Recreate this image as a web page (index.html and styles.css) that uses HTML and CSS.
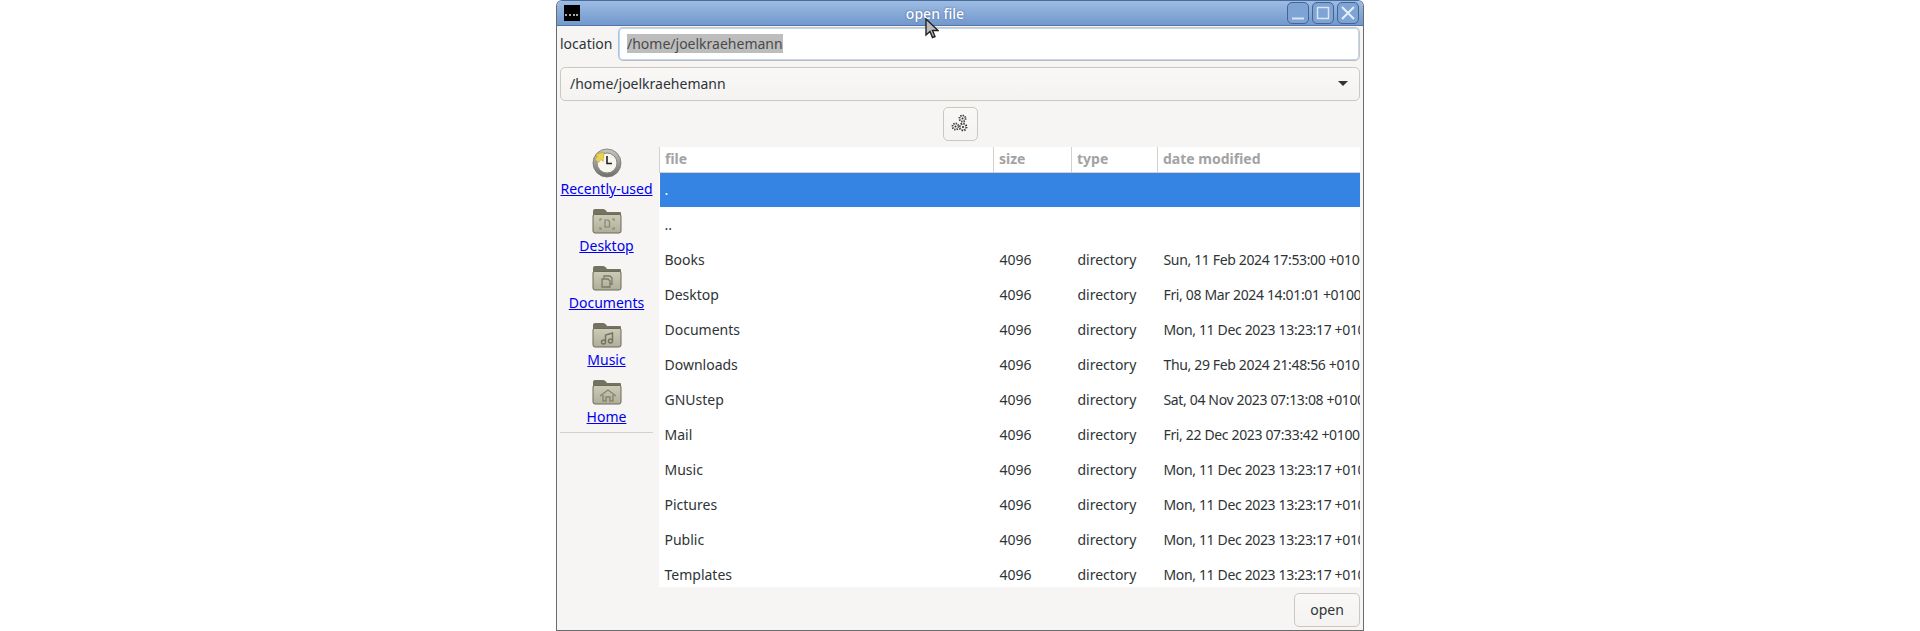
FILE: index.html
```html
<!DOCTYPE html>
<html lang="en">
<head>
    <meta charset="UTF-8">
    <title>open file</title>
    <link rel="stylesheet" href="styles.css">
</head>
<body>
    <svg width="0" height="0" class="defs">
        <defs>
            <linearGradient id="folderBody" x1="0" y1="0" x2="0" y2="1">
                <stop offset="0" stop-color="#cbcbb8"/>
                <stop offset="1" stop-color="#aeae99"/>
            </linearGradient>
            <linearGradient id="clockRim" x1="0" y1="0" x2="0" y2="1">
                <stop offset="0" stop-color="#c9c9c4"/>
                <stop offset="1" stop-color="#6f6f6a"/>
            </linearGradient>
            <symbol id="folder" viewBox="0 0 30 26">
                <path d="M1 24V3q0-2 2-2h8q2 0 3 1.500l1 1.500h13q1 0 1 1v4H1z" fill="#73735f"/>
                <path d="M1 8q0-1.500 1.500-1.500h25Q29 6.500 29 8v15q0 2-2 2H3q-2 0-2-2z" fill="url(#folderBody)" stroke="#6a6a58"/>
            </symbol>
            <symbol id="gear" viewBox="0 0 9 9">
                <circle cx="4.500" cy="4.500" r="3.200" fill="#f7f6f5" stroke="#333" stroke-width="1.600" stroke-dasharray="1.200 1.300"/>
                <circle cx="4.500" cy="4.500" r="2.600" fill="none" stroke="#555" stroke-width=".5"/>
                <circle cx="4.500" cy="4.500" r="1" fill="#333"/>
            </symbol>
        </defs>
    </svg>

    <div class="window">
        <div class="titlebar">
            <svg class="app-icon" width="16" height="16" viewBox="0 0 16 16">
                <rect width="16" height="16" fill="#000"/>
                <path d="M1 10h3M5 10h3M9 10h6" stroke="#ddd" stroke-width="1.500" stroke-dasharray="2 1"/>
            </svg>
            <span class="title">open file</span>
            <div class="wm-buttons">
                <div class="wm-btn">
                    <svg width="20" height="20" viewBox="0 0 20 20"><path d="M4 15.500h12" stroke="#dbe6f5" stroke-width="2"/></svg>
                </div>
                <div class="wm-btn">
                    <svg width="20" height="20" viewBox="0 0 20 20"><rect x="4.500" y="4.500" width="11" height="11" fill="none" stroke="#dbe6f5" stroke-width="1.500"/></svg>
                </div>
                <div class="wm-btn">
                    <svg width="20" height="20" viewBox="0 0 20 20"><path d="M4 4l12 12M16 4L4 16" stroke="#e6edf8" stroke-width="2"/></svg>
                </div>
            </div>
        </div>

        <div class="content">
            <div class="location-row">
                <label class="location-label">location</label>
                <div class="entry"><span class="selected-text">/home/joelkraehemann</span></div>
            </div>

            <div class="combo">
                <span>/home/joelkraehemann</span>
                <span class="arrow"></span>
            </div>

            <div class="tool-row">
                <button class="tool-btn">
                    <svg width="18" height="20" viewBox="0 0 18 20">
                        <use href="#gear" x="7" y="0" width="9" height="9"/>
                        <use href="#gear" x="0" y="8" width="9" height="9"/>
                        <use href="#gear" x="7" y="8" width="10" height="10"/>
                    </svg>
                </button>
            </div>

            <div class="main">
                <div class="sidebar">
                    <a class="place" href="#">
                        <svg class="clock" width="30" height="30" viewBox="0 0 30 30">
                            <circle cx="15" cy="15" r="14" fill="url(#clockRim)" stroke="#77776f" stroke-width=".8"/>
                            <circle cx="15" cy="15" r="10" fill="#f7f6ee" stroke="#8a8a84"/>
                            <path d="M15 8v7.500h5" fill="none" stroke="#222" stroke-width="1.600"/>
                            <path d="M12 4L3.500 6.500l2 2-2.500 3 3.500 3 2.500-3 2 2z" fill="#ecd24f" stroke="#b59d2c" stroke-width=".6"/>
                        </svg>
                        <span>Recently-used</span>
                    </a>
                    <a class="place" href="#">
                        <span class="folder">
                            <svg width="30" height="26"><use href="#folder"/></svg>
                            <svg class="emblem" width="16" height="12" viewBox="0 0 16 12" fill="none" stroke="#85856f" stroke-width="1.200">
                                <path d="M1 3V1h2M13 1h2v2M15 9v2h-2M3 11H1V9"/>
                                <path d="M6 2h3l1.500 1.500V9H6z"/>
                            </svg>
                        </span>
                        <span>Desktop</span>
                    </a>
                    <a class="place" href="#">
                        <span class="folder">
                            <svg width="30" height="26"><use href="#folder"/></svg>
                            <svg class="emblem" width="16" height="13" viewBox="0 0 16 13" fill="none" stroke="#7a7a66" stroke-width="1.300">
                                <path d="M5 3V1h6l2 2v6h-2"/>
                                <path d="M3 4h6l2 2v6H3z"/>
                            </svg>
                        </span>
                        <span>Documents</span>
                    </a>
                    <a class="place" href="#">
                        <span class="folder">
                            <svg width="30" height="26"><use href="#folder"/></svg>
                            <svg class="emblem" width="16" height="13" viewBox="0 0 16 13" fill="none" stroke="#73735f" stroke-width="1.400">
                                <circle cx="4.500" cy="10" r="2"/>
                                <circle cx="11.500" cy="9" r="2"/>
                                <path d="M6.500 10V3l7-2v8"/>
                            </svg>
                        </span>
                        <span>Music</span>
                    </a>
                    <a class="place" href="#">
                        <span class="folder">
                            <svg width="30" height="26"><use href="#folder"/></svg>
                            <svg class="emblem" width="18" height="13" viewBox="0 0 18 13" fill="none" stroke="#85856f" stroke-width="1.400">
                                <path d="M1 7l8-6 8 6"/>
                                <path d="M4 6v6h3V8h4v4h3V6"/>
                            </svg>
                        </span>
                        <span>Home</span>
                    </a>
                    <div class="sidebar-sep"></div>
                </div>

                <div class="list">
                    <table class="files">
                        <colgroup>
                            <col class="col-file">
                            <col class="col-size">
                            <col class="col-type">
                            <col>
                        </colgroup>
                        <thead>
                            <tr>
                                <th>file</th>
                                <th>size</th>
                                <th>type</th>
                                <th>date modified</th>
                            </tr>
                        </thead>
                        <tbody>
                            <tr class="selected"><td>.</td><td></td><td></td><td></td></tr>
                            <tr><td>..</td><td></td><td></td><td></td></tr>
                            <tr><td>Books</td><td>4096</td><td>directory</td><td>Sun, 11 Feb 2024 17:53:00 +0100</td></tr>
                            <tr><td>Desktop</td><td>4096</td><td>directory</td><td>Fri, 08 Mar 2024 14:01:01 +0100</td></tr>
                            <tr><td>Documents</td><td>4096</td><td>directory</td><td>Mon, 11 Dec 2023 13:23:17 +0100</td></tr>
                            <tr><td>Downloads</td><td>4096</td><td>directory</td><td>Thu, 29 Feb 2024 21:48:56 +0100</td></tr>
                            <tr><td>GNUstep</td><td>4096</td><td>directory</td><td>Sat, 04 Nov 2023 07:13:08 +0100</td></tr>
                            <tr><td>Mail</td><td>4096</td><td>directory</td><td>Fri, 22 Dec 2023 07:33:42 +0100</td></tr>
                            <tr><td>Music</td><td>4096</td><td>directory</td><td>Mon, 11 Dec 2023 13:23:17 +0100</td></tr>
                            <tr><td>Pictures</td><td>4096</td><td>directory</td><td>Mon, 11 Dec 2023 13:23:17 +0100</td></tr>
                            <tr><td>Public</td><td>4096</td><td>directory</td><td>Mon, 11 Dec 2023 13:23:17 +0100</td></tr>
                            <tr><td>Templates</td><td>4096</td><td>directory</td><td>Mon, 11 Dec 2023 13:23:17 +0100</td></tr>
                        </tbody>
                    </table>
                </div>
            </div>

            <div class="footer">
                <button class="open-btn">open</button>
            </div>
        </div>

        <svg class="cursor" width="14" height="21" viewBox="0 0 14 21">
            <path d="M1 1v16l4-3.500 2.500 6 2.500-1-2.500-6H13z" fill="#bbb" stroke="#222" stroke-width="1.400"/>
        </svg>
    </div>
</body>
</html>
```

FILE: styles.css
```css
html, body {
    margin: 0;
    height: 100%;
}
body {
    font-family: "Noto Sans", sans-serif;
    font-size: 14px;
    color: #2e3436;
    background-color: white;
    display: flex;
    justify-content: center;
    overflow: hidden;
}
.defs {
    position: absolute;
}
.window {
    position: relative;
    width: 808px;
    height: 631px;
    box-sizing: border-box;
    border: 1px solid #6b6b6b;
    border-top-color: #4a6c9b;
    border-radius: 6px 6px 0 0;
    background-color: #f6f5f4;
    display: flex;
    flex-direction: column;
    overflow: hidden;
}
.titlebar {
    height: 24px;
    flex: none;
    background: linear-gradient(#9dbce3, #7298cd);
    border-bottom: 1px solid #4f77ad;
    display: flex;
    align-items: center;
    position: relative;
    padding-left: 7px;
}
.title {
    position: absolute;
    left: 0;
    right: 50px;
    text-align: center;
    color: white;
    font-weight: 500;
    text-shadow: 0 0 2px #3d5f90;
}
.app-icon {
    flex: none;
}
.wm-buttons {
    margin-left: auto;
    margin-right: 4px;
    display: flex;
    gap: 3px;
    position: relative;
}
.wm-btn {
    width: 22px;
    height: 22px;
    box-sizing: border-box;
    border: 1px solid #44658f;
    border-radius: 5px;
    background-color: #7ea3d5;
    display: flex;
    align-items: center;
    justify-content: center;
}
.content {
    flex: 1;
    display: flex;
    flex-direction: column;
    padding: 1px 3px 3px 3px;
    min-height: 0;
}
.location-row {
    display: flex;
    align-items: center;
    height: 34px;
    flex: none;
}
.location-label {
    width: 58px;
    padding-bottom: 2px;
    color: #2e3436;
}
.entry {
    flex: 1;
    height: 34px;
    box-sizing: border-box;
    border: 1px solid #cdc7c2;
    border-bottom-color: #bbb;
    border-left-color: #a9c4e6;
    box-shadow: 0 0 0 1px #c2d6f0 inset;
    border-radius: 5px;
    background-color: white;
    padding: 0 0 2px 8px;
    display: flex;
    align-items: center;
}
.selected-text {
    background-color: #bdbdbd;
    color: #4a4a4a;
}
.combo {
    height: 34px;
    flex: none;
    box-sizing: border-box;
    margin-top: 6px;
    border: 1px solid #cdc7c2;
    border-radius: 5px;
    background: linear-gradient(#f9f8f7, #f4f3f1);
    padding: 0 9px 2px;
    display: flex;
    align-items: center;
    justify-content: space-between;
}
.arrow {
    width: 0;
    height: 0;
    margin-right: 2px;
    border-left: 5px solid transparent;
    border-right: 5px solid transparent;
    border-top: 5px solid #2e3436;
}
.tool-row {
    display: flex;
    justify-content: center;
    flex: none;
    margin-top: 6px;
    margin-bottom: 6px;
}
.tool-btn {
    width: 35px;
    height: 34px;
    padding: 0;
    box-sizing: border-box;
    border: 1px solid #cdc7c2;
    border-radius: 5px;
    background: linear-gradient(#f9f8f7, #f4f3f1);
    display: flex;
    align-items: center;
    justify-content: center;
}
.main {
    display: flex;
    height: 440px;
    flex: none;
}
.sidebar {
    width: 93px;
    padding-right: 6px;
    flex: none;
    display: flex;
    flex-direction: column;
}
.place {
    height: 53px;
    margin-top: 4px;
    display: flex;
    flex-direction: column;
    align-items: center;
    color: #0000ee;
    white-space: nowrap;
}
.place:first-child {
    height: 56px;
    margin-top: 1px;
}
.clock {
    display: block;
    flex: none;
    margin-bottom: 1px;
}
.folder {
    position: relative;
    display: block;
    width: 30px;
    height: 28px;
    flex: none;
}
.folder svg {
    display: block;
}
.emblem {
    position: absolute;
    left: 7px;
    top: 10px;
}
.sidebar-sep {
    border-top: 1px solid #d5d0cc;
}
.list {
    flex: 1;
    background-color: white;
    overflow: hidden;
}
.files {
    width: 701px;
    table-layout: fixed;
    border-collapse: collapse;
}
.col-file {
    width: 334px;
}
.col-size {
    width: 78px;
}
.col-type {
    width: 86px;
}
.files th {
    height: 25px;
    padding: 0 5px 2px;
    box-sizing: border-box;
    text-align: left;
    font-weight: bold;
    color: #a3a3a3;
    border-left: 1px solid #d5d0cc;
    border-bottom: 1px solid #d5d0cc;
}
.files td {
    height: 35px;
    padding: 0 6px;
    box-sizing: border-box;
    white-space: nowrap;
    overflow: hidden;
}
.files td:first-child {
    padding-left: 5px;
}
.files td:last-child {
    padding-right: 0;
    letter-spacing: -0.35px;
}
.selected td {
    background-color: #3584e4;
    color: white;
}
.footer {
    display: flex;
    justify-content: flex-end;
    margin-top: 6px;
}
.open-btn {
    width: 66px;
    height: 34px;
    padding: 0 0 2px;
    box-sizing: border-box;
    font: inherit;
    color: #2e3436;
    border: 1px solid #cdc7c2;
    border-radius: 5px;
    background: linear-gradient(#f9f8f7, #f4f3f1);
}
.cursor {
    position: absolute;
    left: 368px;
    top: 17px;
}
```
